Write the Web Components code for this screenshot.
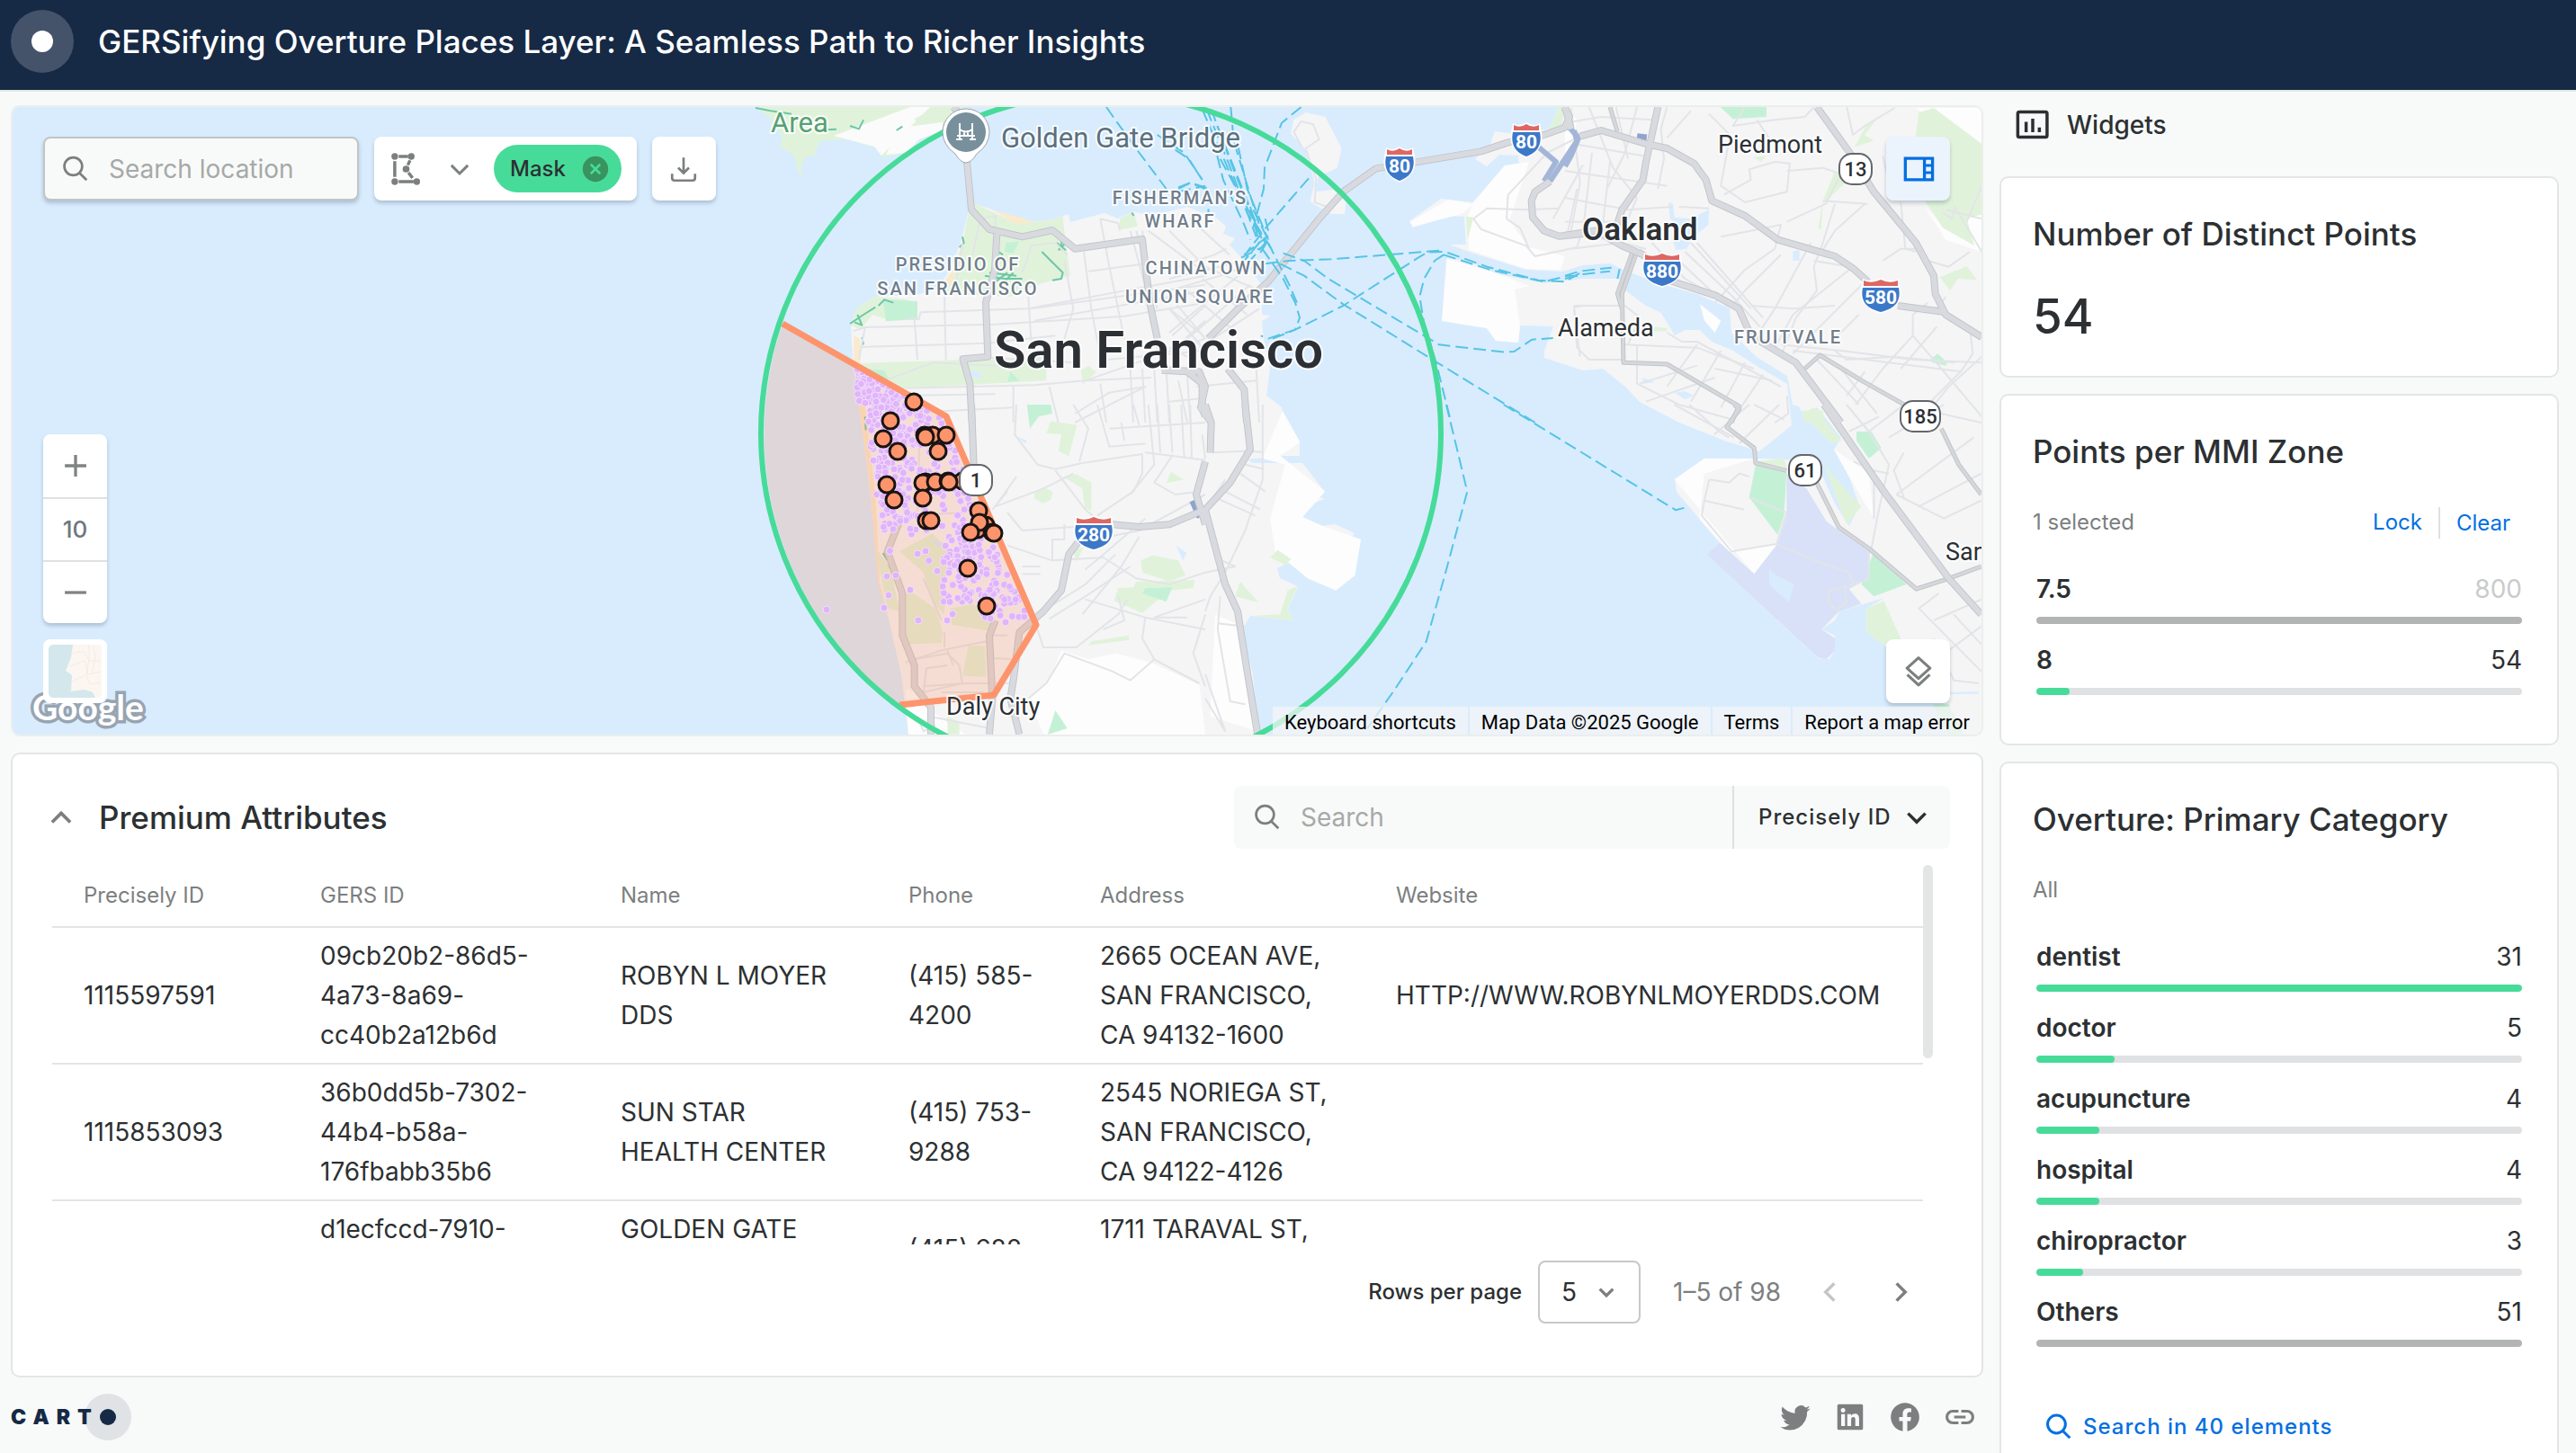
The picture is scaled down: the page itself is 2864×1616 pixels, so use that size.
<!DOCTYPE html>
<html lang="en">
<head>
<meta charset="utf-8">
<title>GERSifying Overture Places Layer</title>
<style>
html,body{margin:0;height:100%}
body{font-family:Inter,"Liberation Sans",sans-serif;font-size:28px;line-height:44px;color:#2c3032;background:#f8faf9;overflow:hidden}
</style>
</head>
<body>
<map-app></map-app>
<script>
const base = `*{box-sizing:border-box}button,input,select{font:inherit;color:inherit;margin:0;border:0;background:none;padding:0}button{cursor:pointer}h1,h2,p{margin:0;font-weight:500}svg{display:block;flex:none}`;
function define(name, css, html) {
  customElements.define(name, class extends HTMLElement {
    constructor() {
      super();
      this.attachShadow({mode: 'open'});
    }
    connectedCallback() {
      if (this.shadowRoot.childNodes.length) return;
      const markup = typeof html === 'function' ? html(this) : html;
      this.shadowRoot.innerHTML = `<style>${base}${css}</style>${markup}`;
    }
  });
}

/* ---------- icons ---------- */
const icons = {
  search: '<circle cx="10.3" cy="10" r="6.6"/><path d="M15 15l5.2 5.2"/>',
  down: '<path d="M6.5 9.5l5.5 5.5 5.5-5.5"/>',
  up: '<path d="M6.5 15l5.5-5.5 5.5 5.5"/>',
  left: '<path d="M14.5 6.5L9 12l5.5 5.5"/>',
  right: '<path d="M9.5 6.5L15 12l-5.5 5.5"/>',
  plus: '<path d="M5.5 12h13M12 5.5v13"/>',
  minus: '<path d="M5.5 12h13"/>',
  download: '<path d="M12 3.5v11.5M8 11l4 4 4-4M3.500 15.500v3.2q0 1.800 1.800 1.800h13.400q1.800 0 1.800-1.800v-3.200"/>',
  lasso: '<path d="M4.5 7v10M7 4h6M7 20h9.5M14.2 6.5l-1.4 3M13.2 14.3l2.6 3.3" stroke-width="2"/><g fill="currentColor" stroke="none"><circle cx="4.5" cy="4" r="2.1"/><circle cx="15" cy="4" r="2.1"/><circle cx="11.7" cy="12" r="2.2"/><circle cx="4.5" cy="20" r="2.1"/><circle cx="18.5" cy="20" r="2.1"/></g>',
  clear: '<circle cx="12" cy="12" r="10" fill="#38935f" stroke="none"/><path d="M8.3 8.3l7.4 7.4M15.7 8.3l-7.4 7.4" stroke="#47db99"/>',
  panel: '<path d="M4 5.500h16.500v13H4zM15.600 5.500v13" stroke-width="1.800"/><path d="M16 9.800h5M16 14.200h5" stroke-width="1.600"/>',
  layers: '<path d="M12 3.2l7.3 6.6-7.3 6.6-7.3-6.6zM4.9 13.9l7.1 6.6 7.1-6.6" stroke-linejoin="round"/>',
  chart: '<rect x="2.500" y="3.700" width="18.6" height="16" rx="1"/><path d="M7.800 16.500v-6.500M12 16.500v-8.500M16.200 16.500v-3" stroke-width="2"/>',
  twitter: '<path fill="currentColor" stroke="none" d="M22.5 6c-.8.35-1.6.6-2.5.7.9-.5 1.6-1.4 1.9-2.4-.8.5-1.8.9-2.7 1.1a4.3 4.3 0 0 0-7.4 3.9C8.300 9.100 5.100 7.400 3 4.800a4.300 4.300 0 0 0 1.300 5.700c-.7 0-1.400-.2-2-.5 0 2.100 1.500 3.800 3.500 4.200-.6.2-1.300.2-1.900.1.500 1.700 2.100 2.900 4 3a8.600 8.600 0 0 1-6.400 1.800A12.100 12.100 0 0 0 20.300 8.200c.9-.6 1.600-1.300 2.200-2.200z"/>',
  linkedin: '<path fill="currentColor" stroke="none" fill-rule="evenodd" d="M4 3h16q1 0 1 1v16q0 1-1 1H4q-1 0-1-1V4q0-1 1-1zm1.700 7v8.300h2.700V10zM7 5.700a1.600 1.600 0 1 0 .01 0zM10 10v8.300h2.700v-4.400q0-1.900 1.500-1.900t1.400 1.900v4.400h2.700v-5q0-3.600-2.900-3.600-1.900 0-2.700 1.400V10z"/>',
  facebook: '<path fill="currentColor" stroke="none" d="M22 12a10 10 0 1 0-11.600 9.900v-7H7.900V12h2.500V9.800c0-2.500 1.500-3.900 3.800-3.900 1.100 0 2.200.2 2.200.2v2.500h-1.300c-1.200 0-1.600.8-1.600 1.500V12h2.800l-.4 2.900h-2.300v7A10 10 0 0 0 22 12z"/>',
  link: '<path d="M11 7.900H7a4.100 4.100 0 0 0 0 8.200h4M13 7.900h4a4.100 4.100 0 0 1 0 8.200h-4M8 12h8"/>'
};
define('app-icon', ':host{display:block;flex:none}', el => {
  const s = el.getAttribute('size') || 36;
  return `<svg width="${s}" height="${s}" viewBox="0 0 24 24" fill="none" stroke="currentColor" stroke-width="${el.getAttribute('weight') || 1.8}" aria-hidden="true">${icons[el.getAttribute('name')]}</svg>`;
});

/* ---------- header ---------- */
define('app-header', `
:host{display:flex;align-items:center;gap:27px;height:102px;padding:0 12px 8px;background:#162945;border-bottom:2px solid #e4e8e6;color:#fff}
.logo{width:70px;height:70px;border-radius:50%;background:#45536a;display:grid;place-items:center}
.logo i{width:24px;height:24px;border-radius:50%;background:#fff}
h1{font-size:35px;line-height:52px}`,
`<span class="logo"><i></i></span><h1><slot></slot></h1>`);

/* ---------- map drawing ---------- */
const frames = {A: '840 110', B: '1300 110', C: '1740 110', D: '840 450', E: '1340 450', G: ''};
function layer(cls, sets) {
  return Object.keys(sets).map(k => {
    const t = k === 'G' ? '' : ` transform="translate(${frames[k]}) scale(${k === 'E' ? '.5548 .33333' : '.33333'})"`;
    return `<g${t}>${sets[k].split('|').map(d => `<path class="${cls}" d="M${d.trim()}"/>`).join('')}</g>`;
  }).join('');
}
const land = {G: `1010 817 1002 750 990 697 977 643 968 550 955 450 949 410 946 363 952 343 973 330 1017 328 1040 323 1057 300 1070 263 1077 233 1085 227 1103 233 1130 248 1167 245 1188 238 1190 247 1228 237 1243 243 1260 235 1280 240 1320 230 1353 243 1363 252 1360 260 1373 265 1367 272 1383 290 1403 317 1403 350 1413 351 1403 357 1405 377 1412 410 1408 440 1425 453 1426 460 1418 478 1429 492 1445 492 1445 507 1423 507 1387 511 1393 515 1448 515 1473 547 1454 548 1473 555 1459 560 1448 557 1448 575 1470 585 1484 583 1506 593 1501 600 1513 600 1509 610 1498 613 1509 617 1490 628 1506 641 1490 640 1485 657 1470 643 1454 643 1443 620 1420 632 1423 643 1443 652 1432 677 1437 690 1390 685 1383 697 1387 727 1393 750 1398 817z
|1733 119 1723 143 1690 150 1662 146 1657 160 1640 177 1653 185 1667 172 1688 173 1689 186 1673 184 1638 225 1602 221 1567 246 1571 253 1613 240 1628 241 1630 272 1612 272 1633 280 1697 300 1737 302 1760 295 1790 293 1812 303 1850 317 1887 327 1923 343 1925 370 1953 397 1987 418 1993 450 2000 452 2006 463 2020 453 2047 487 2039 500 2056 530 2067 563 2056 585 2040 560 2022 520 2000 512 1960 510 1895 510 1862 533 1864 547 1911 603 1898 617 2022 733 2034 733 2040 723 2040 690 2045 680 2095 665 2075 677 2075 703 2095 717 2120 740 2161 782 2172 817 2203 817 2203 119z
|1608 287 1603 357 1653 365 1663 379 1688 381 1690 362 1727 363 1717 390 1717 398 1760 412 1782 410 1807 430 1823 447 1867 470 1917 490 1956 502 1992 473 1987 427 1953 407 1927 390 1903 380 1890 367 1873 367 1862 373 1847 348 1830 340 1807 323 1800 310 1760 310 1717 315 1667 305 1630 290z`,
B: '415 70 455 45 520 60 575 165 560 230 495 260 490 310 570 300 590 340 585 385 540 383 480 350 470 340 485 280 455 170 405 115z'};
const white = {G: `1609 288 1603 357 1653 365 1663 379 1688 381 1690 362 1684 322 1700 318 1667 305z|1638 225 1673 184 1700 180 1678 245 1700 275 1740 285 1735 300 1697 299 1633 278 1632 240z|1610 222 1568 247 1571 252 1625 238 1638 227z`,
D: `1020 820 1110 850 1200 830 1320 860 1480 935 1500 1100 960 1100 910 980 980 920z|500 950 560 960 570 1010 700 1100 510 1100z`,
E: `155 20 190 125 150 170 240 290 195 375 235 405 312 450 300 570 262 620 205 580 140 490 130 380 160 200 115 180z|20 700 75 740 105 1090 10 1040z|940 250 1000 180 1100 180 1000 230 990 380 1050 490 1145 465 1100 565z|1260 150 1330 230 1340 380 1290 240z`,
C: '0 30 40 70 20 200 0 230z|1170 30 1390 30 1390 190z|1200 360 1260 420 1390 380 1390 510 1270 470z|450 685 520 740 500 780 465 740z'};
const park = {
G: '840 119 855 130 870 153 867 163 883 173 887 190 895 199 890 187 895 175 905 173 912 157 940 155 977 165 980 175 1007 170 1020 155 1048 145 1057 130 1070 119z',
A: '712 370 735 350 870 415 980 405 1025 390 1030 440 1050 590 940 620 850 660 630 650 690 480z|335 700 400 660 500 668 540 680 450 740 390 720 350 770 320 755z|350 882 690 870 900 870 970 850 970 940 780 950 430 970z|1215 400 1260 375 1275 425 1215 437z|1085 905 1110 890 1137 912 1092 952z',
D: '985 55 1072 68 1045 172 1010 155 1020 100 970 95z|1025 240 1070 232 1120 260 1120 355 1098 345 1090 280z|930 290 960 275 992 290 985 318 958 330 930 312z|1285 520 1325 503 1410 520 1435 570 1380 590 1290 560z|1210 612 1260 610 1270 590 1465 585 1460 612 1380 620 1290 695 1195 655z|1385 225 1430 250 1370 262z|1120 790 1245 770 1245 785 1110 803z|1060 485 1095 475 1070 525z|640 1040 680 1060 680 1100 640 1100z|1270 940 1350 1020 1300 970z|480 490 590 430 640 480 630 700 590 660 560 560z|490 640 520 625 600 680 625 760 620 795 500 800z|400 480 450 540 480 690 440 680z|650 680 720 665 790 700 780 755 655 735z|710 803 765 806 770 908 690 905z',
C: '1180 45 1230 30 1390 150 1390 385 1340 400 1365 490 1260 430 1200 340 1170 120z|965 160 1010 80 1045 60 1000 120 1030 140z|900 240 935 280 860 350 855 435 845 430 860 340z|1250 595 1340 558 1375 605 1310 600 1285 640z|290 760 340 765 340 775 290 775z|790 1040 860 1040 865 1080 800 1080z|625 195 670 190 655 210z',
B: '1300 27 1315 27 1310 95 1265 105z|990 392 1015 395 995 470z',
E: '130 510 145 485 172 515 160 535z|60 640 70 590 107 660z|90 705 150 700 165 620 185 605 165 680 175 720z|1195 30 1220 10 1275 120 1255 130z|1240 200 1265 250 1315 340 1285 400z|1325 680 1360 655 1395 785 1360 800 1325 760z|1105 190 1160 180 1165 210z'};
const park2 = {
A: '425 670 540 675 540 735 435 742z|370 900 430 905 445 935 390 925z|850 910 880 940 840 945z|835 480 880 475 860 515 830 510z',
D: '905 0 985 0 990 30 945 40 915 80z|1300 612 1390 610 1370 658 1290 630z|1000 1020 1040 1080 1010 1090 975 1100z',
C: '518 27 672 27 672 60 560 67z|1220 868 1243 850 1275 880 1270 890 1225 880z',
E: '1103 200 1165 225 1160 370 1147 435 1090 310z|1340 490 1405 600 1340 640 1315 600z|1305 90 1335 90 1355 145 1330 180 1305 120z|1458 1000 1490 1000 1520 1100 1490 1100z'};
const airport = {E: '1165 230 1205 280 1245 390 1330 490 1330 580 1290 615 1315 665 1270 690 1235 750 1262 780 1262 820 1245 850 1228 845 1005 500 1030 460 1100 565 1147 465 1165 370z'};
const lake = {C: '345 345 360 350 365 395 420 400 480 370 478 420 430 460 405 500 370 505 355 460 400 440 350 400z|760 508 782 505 782 540 760 540z|365 980 400 975 430 990 400 1003z|258 930 300 945 262 950z|70 910 110 915 85 930 90 960 125 965 125 985 85 975 65 950z', A: '720 905 755 915 750 930 720 930z', D: '1403 470 1438 495 1425 520z|870 105 905 120 900 130z|580 447 635 465 610 475z', E: '1130 550 1145 570 1180 600 1170 660 1130 600z|1490 960 1550 958 1550 965 1490 966z|1235 750 1262 720 1262 770z'};
const sand = {A: '328 790 348 800 350 900 370 1000 345 1000 328 900z|790 370 930 410 870 418z|630 610 690 520 650 620z', D: '345 0 365 0 400 300 415 600 450 740 410 600 385 300z'};
const minor = {
A: `365 762 800 752 1230 725 1500 680|350 828 770 815 1000 790|550 712 910 700 1500 590|630 660 635 870|530 735 540 870|550 712 545 735 500 735|920 700 1500 620|1095 510 1120 700 1150 860|1150 400 1180 560 1230 800|1110 575 1300 550|930 740 1500 640|910 660 920 820|680 860 920 870 1060 880|430 940 590 880 800 890 960 860|500 965 930 955 1100 940 1320 930|480 990 800 985|860 960 860 1080|560 1045 860 1030|325 775 365 762 345 870|720 540 750 400 800 390 800 430|670 610 690 480|890 580 920 490 1000 480 1040 520|1250 440 1320 700 1350 900|1270 440 1340 700|1290 440 1300 500|1100 940 1500 800|1170 870 1500 840|1250 900 1260 1080|1290 900 1300 1080|1330 900 1340 1080|1370 900 1380 1080|980 960 1010 1080|1150 950 1170 1080|1390 790 1500 690|1400 830 1500 740|1380 700 1500 840|1400 680 1500 800|1150 400 1210 415 1215 440|1310 440 1500 580|1030 540 1060 700 1030 800|1065 1050 1180 980 1300 960 1065 1080`,
B: `0 640 170 590 250 560|0 600 250 540|30 560 150 520 190 500|0 440 120 560 300 640|70 400 200 520|0 700 100 780|60 640 200 760|110 600 260 720|0 780 230 590|60 800 270 620|100 830 300 700|0 830 60 860|30 940 60 1080|60 920 70 1080|90 960 290 940|100 1000 0 1010|290 900 300 1080|445 165 415 110 440 75 480 85 500 135 455 165 490 270 485 345 540 365|1015 400 1060 365 1190 370 1300 365|1015 400 1040 435 1190 490 1220 525 1360 495 1380 430|1125 400 1130 320 1260 180 1380 120|1125 400 1170 430 1200 500|1280 400 1380 220|1330 440 1360 300|1350 695 1380 690|1350 695 1370 860`,
C: `80 27 160 230 240 330|170 27 210 200|240 27 200 180 140 300|0 80 120 60 290 70|30 150 260 190|0 240 340 290|0 330 210 370 360 360|20 30 50 280 20 440|90 180 60 440|150 210 120 470|0 410 200 410|20 500 190 480 270 500|340 27 320 100 330 200 310 300|420 40 340 130|480 50 550 120 520 290 600 345 740 310 750 215 700 210 615 235 620 270 530 320|600 27 560 90 700 70 800 60 830 27|640 70 680 130|940 27 960 120 1000 90 1100 30|740 240 860 230 920 250 870 350 740 410|520 460 720 420 700 500 600 570 500 680|380 360 480 365|420 480 620 700|440 480 660 730|400 510 560 660 650 760|380 540 540 690|290 480 400 600 540 680|250 500 320 560|720 520 600 640 560 690|820 480 700 700 640 790|900 350 860 480 830 560 840 640 770 730 720 860|1000 350 900 440 850 520|1120 345 1135 500 1170 510|960 560 760 720 700 830|1000 610 850 760 760 850|1060 540 1120 500 1180 500|830 540 950 560|620 690 760 700 900 690|720 820 920 840 1160 870 1390 880|760 840 1320 910|900 840 940 870 1100 860 1300 880|1160 720 1160 790 1230 870 1390 1060|1160 790 1060 900 970 1020|1320 910 1230 1000 1190 1060|1390 860 1280 960 1200 1060|1350 760 1360 850 1320 910|1240 760 1120 900|980 720 900 800|1210 680 1160 720|1270 660 1240 700|30 690 200 690 250 730 210 820|30 690 40 830 80 870 200 870|200 820 440 830 630 900|240 820 240 950 380 1020 560 1070|340 780 390 810 440 810 720 960|440 820 340 960|520 840 420 1010|600 880 520 1030|660 920 560 1070|250 950 440 890|270 1010 500 930|740 990 745 1050 700 1080|500 900 690 940|840 870 980 1020|920 900 1040 1050|1000 910 940 990|1260 380 1290 400 1300 360 1390 510|1270 370 1390 400|1350 510 1280 560 1210 540|1060 190 1080 280 1170 300|860 340 1010 350|240 330 180 470|1390 290 1340 410`,
D: `870 0 865 100 940 200 1000 215 1090 195|870 240 800 340 960 280 1060 230|840 360 890 420 1100 405|790 350 840 290|1060 0 1110 80 1080 190|1140 0 1180 140 1300 130|1180 80 1500 60|1300 160 1500 185|1220 60 1230 120|1260 0 1280 70|1310 0 1330 200 1250 300|1340 0 1350 160|1380 0 1390 160|1420 0 1430 180|1450 0 1455 180|1490 100 1500 180|1090 195 1290 165 1290 230 1260 290 1140 370|840 470 990 520 1160 510 1270 580 1380 600 1500 560|1030 400 1030 450 990 450 990 520|1100 550 1160 500 1300 380|940 700 1100 600 1200 500|980 715 1100 640 1250 540|1280 440 1220 540 1090 700|1160 400 1100 350 1000 220|930 720 960 810 1070 810 1210 700 1240 650|1160 750 1230 720 1210 640|1100 650 1300 710 1500 750|1300 710 1290 780 1330 850 1480 930|910 980 970 930 1030 830 1190 890 1250 920 1330 850|1500 700 1460 830 1500 940|1440 710 1330 710 1500 650|890 540 950 540|890 565 950 565|560 580 620 720|500 860 620 820 770 790|530 850 640 830 680 870|640 820 660 870|680 870 690 930 560 960 570 880 640 870|560 940 700 930 850 930|780 845 860 850|780 770 840 770|550 0 540 370|630 760 630 810|600 1070 560 1090 540 1040|580 1040 780 1080|620 960 760 960|510 370 700 360|1390 170 1330 260 1400 300 1480 290|1180 440 1280 420 1500 300`,
E: `15 160 80 155 115 158|118 215 80 200|115 0 115 250 80 420 40 560 10 640 0 690|0 350 40 250|20 310 100 370|40 290 110 350|70 230 120 290|0 560 60 540 20 510|25 730 80 740|30 640 25 750 50 990 80 1000|0 900 40 1090 0 980|1010 250 1000 320 995 370 1055 490 1145 465 1165 360 1090 310|1010 250 1050 260 1070 230 1090 240|1000 320 1080 350|1145 465 1220 520 1290 560 1300 600 1250 620 1248 660 1265 685 1285 660 1282 600|1330 490 1330 580 1300 600|940 0 1060 110|970 0 1030 90 1050 110|1090 0 1020 100|1150 0 1070 130|1100 0 1160 50|1285 0 1330 90 1370 200 1350 350 1335 480|1330 90 1400 0|1370 110 1480 0|1385 300 1540 110|1385 300 1480 380 1555 320|1400 160 1380 220 1400 310|1430 340 1555 230|1340 220 1370 230|1460 720 1555 650|1490 820 1555 740|1400 0 1500 40 1555 60|1470 630 1430 680 1555 890|1460 780 1500 920 1550 930|1300 190 1340 220 1340 380|1500 700 1555 800|1350 40 1290 90`};
const major = {
A: '705 210 720 370 780 435 890 460 990 438 1065 500 1290 468 1315 680 1340 800|805 450 798 570 768 680 775 860 692 868 715 950 722 1080|690 60 660 27|1355 905 1440 910 1490 950 1490 1030 1500 1060',
B: '130 800 230 700 330 610 500 400 580 310 690 232 770 220 1040 175 1130 145 1250 120 1320 95 1335 60 1318 27|1380 450 1300 458 1250 440 1212 395 1208 340 1220 310 1270 275|0 905 100 910 120 960 105 1030 140 1080|195 900 250 970 258 1080',
C: '0 27 20 100|50 125 120 105 270 150 340 165 430 215 470 270 490 340 600 390 710 470 900 525 960 565 1010 610|310 27 270 210 260 270 190 370 170 430 0 455|120 450 190 490 260 520 330 600 500 655 580 700 620 790 770 880 920 1080|840 27 950 180 1030 310 1080 370 1170 480 1230 590 1235 650 1270 720 1390 795|1110 690 1260 710',
D: '720 0 730 250|1190 400 1280 408 1380 400 1500 350|1500 190 1470 300 1500 400|1075 460 1045 500 1020 620 960 690 880 760 860 920 850 980 880 1100|480 390 440 490 490 630 490 770 530 870 530 940 585 1010 585 1100|800 720 780 770 790 980 780 1100|1500 0 1480 20',
E: '0 0 12 60 10 160|80 0 90 150 50 260 0 350 40 600 65 690 85 900 105 1100|1240 0 1360 290 1490 580 1555 700'};
const mid = {
C: '240 510 190 650 195 880 340 885 580 1025 555 1080|225 510 175 650 190 700|800 900 850 855 990 940 1140 1025|150 27 175 110',
E: '1060 0 1070 15 1045 75 1100 145 1103 195 1165 220|1225 260 1270 410 1330 480 1425 615 1490 580 1555 540|1475 80 1510 200 1555 300'};
const ramp = {C: '10 90 45 130 20 190 0 225', B: '1225 155 1290 210 1250 275|1350 105 1360 140 1270 275'};
const ferry = {
A: '1170 27 1200 70 1280 180 1370 300|1340 120 1430 180 1490 270|1410 295 1450 280 1500 300|1410 310 1500 290',
B: `110 35 260 380 320 480|125 35 200 220 290 460|140 35 220 250 310 470|160 90 300 440|170 200 290 420 340 500|205 27 215 140 300 420|230 160 260 300 330 470|160 190 180 270 250 420 270 470|440 27 375 80 318 230 315 300 280 430|465 265 330 420 260 510|20 170 65 200 110 270|30 300 70 280 135 300 130 380|250 520 300 480 340 450|240 530 320 490|260 550 330 470|320 550 400 540 540 535 915 505|380 515 450 540 530 600 900 820 1120 845 1150 843 1210 803 1280 798|370 550 450 590 580 685 870 865 1220 1080|310 500 380 600 420 680 435 730 420 770 330 800 305 790|330 480 400 620 430 690|345 800 420 770 580 690 830 530 860 512 920 510 1060 560 1230 605 1320 610 1380 575|915 520 1070 570 1250 610 1330 590 1380 590|915 520 885 540 850 600 835 660 850 750 890 880 940 1080|280 370 330 470 300 520|320 400 330 440|270 360 300 480 250 540`,
C: '0 590 50 575 155 563|0 600 60 585 150 575|182 568 175 600',
E: '483 0 525 290 480 570 443 790 380 950 325 1080|598 0 943 352 970 340'};
const scrub = {A: '0 30 50 40 120 50|240 103 270 101|315 90 345 100 360 70|470 105 490 92|315 750 360 720 400 695|340 720 355 755 330 745|410 690 430 670 460 680|355 795 360 820|680 495 695 480 690 460|1005 480 1035 505|1035 480 1010 505|1020 470 1022 505|955 510 1025 580 1020 600 990 605|765 590 830 600 890 600|780 580 870 590|810 510 825 520|1255 380 1262 390|800 610 840 580|830 610 860 580', D: '425 495 440 520|445 535 455 555|365 40 368 85'};
const streak = {C: '240 128 272 132', D: '1460 320 1485 375'};

function seeded(seed) { return () => (seed = (seed * 16807) % 2147483647) / 2147483647; }
function dots() {
  const rnd = seeded(4711), out = [];
  const edgeR = y => y < 463 ? 870 + (y - 360) * 1.77 : 1052 + (y - 463) * .431;
  const edgeL = y => y < 450 ? 953 : 962 + (y - 450) * .125;
  while (out.length < 600) {
    const y = 408 + rnd() * 280, l = edgeL(y), r = edgeR(y) - 6, x = l + rnd() * (r - l);
    if (r < l) continue;
    if (y > 590 && x < 1048 && rnd() < .98) continue;
    if (y < 590 && x > 1015 && rnd() < .35) continue;
    if (y > 672 && x < 1090) continue;
    out.push([x, y]);
  }
  [[919, 678], [983, 676], [1021, 690], [1053, 690], [1059, 683], [996, 640], [986, 641], [1020, 616], [1029, 613], [1042, 635], [1012, 656], [988, 662], [1118, 692]].forEach(p => out.push(p));
  return out.map(([x, y]) => `<circle cx="${x.toFixed(1)}" cy="${y.toFixed(1)}" r="4"/>`).join('');
}
const places = [[529,-9],[450,55],[425,115],[475,155],[592,103],[563,102],[567,107],[636,102],[610,157],[437,268],[463,318],[690,256],[568,257],[557,262],[600,259],[642,256],[645,257],[559,312],[571,387],[584,387],[745,355],[768,402],[742,418],[747,393],[718,425],[790,425],[796,428],[707,546],[772,671]];
const shield = (x, y, t) => {
  const w = t.length > 2 ? 20 : 15, o = w + 2;
  return `<g transform="translate(${x} ${y})"><path style="fill:#fff" d="M${-o} -9L${-w} -19Q${-w / 2} -14 0 -20Q${w / 2} -14 ${w} -19L${o} -9C${o + 3} 8 ${w - 5} 15 0 20C${5 - w} 15 ${-o - 3} 8 ${-o} -9z"/><path style="fill:#dd6763" d="M${-w + 1} -11V-17Q${-w / 2} -13 0 -18Q${w / 2} -13 ${w - 1} -17V-11z"/><path style="fill:#3c78c8" d="M${-w} -9H${w}C${w + 3} 6 ${w - 4} 14 0 18C${4 - w} 14 ${-w - 3} 6 ${-w} -9z"/><text class="sh" y="9">${t}</text></g>`;
};
const pill = (x, y, t) => {
  const w = t.length > 2 ? 22 : 18;
  return `<rect x="${x - w}" y="${y - 17}" width="${w * 2}" height="34" rx="14" fill="#fff" stroke="#63676b" stroke-width="2"/><text class="pl" x="${x}" y="${y + 8}">${t}</text>`;
};
const label = (x, y, cls, t) => `<text class="${cls}" x="${x}" y="${y}">${t}</text>`;

define('map-canvas', `
:host{display:block;background:#d8ecfe}
svg{width:100%;height:100%}
path{vector-effect:non-scaling-stroke;fill:none;stroke-linejoin:round}
path.land{fill:#f5f5f6}path.white{fill:#fdfdfd}path.park{fill:#e0f3da}path.park2{fill:#c4f1d6}path.air{fill:#d8e1f7}path.lake{fill:#d8ecfe}path.sand{fill:#faeacb}
path.minor{stroke:#e3e4e8;stroke-width:2}
path.c1{stroke:#c2c6ca;stroke-width:8}path.f1{stroke:#d9dadf;stroke-width:6}
path.c2{stroke:#c2c6ca;stroke-width:5}path.f2{stroke:#d5d7da;stroke-width:3}
path.ramp{stroke:#a4b6d8;stroke-width:6}
path.streak{stroke:#8fa3cc;stroke-width:9}
path.ferry{stroke:#56c4e4;stroke-width:2;stroke-dasharray:14 6}
path.scrub{stroke:#6cc7a6;stroke-width:2}
text{font-family:Roboto,sans-serif;paint-order:stroke;stroke:#fff;stroke-opacity:.85;stroke-width:4px;stroke-linejoin:round;fill:#2c3034}
.area{font-size:20px;font-weight:500;letter-spacing:2px;fill:#717d8b;text-anchor:middle}
.town{font-size:27px}.city{font-size:35px;font-weight:600}.big{font-size:58px;font-weight:600;text-anchor:middle}
.poi{font-size:31px;fill:#5b707f}.green{font-size:31px;fill:#56a173}
.sh{font-size:21px;font-weight:700;fill:#fff;stroke:none;text-anchor:middle}
.pl{font-size:22px;font-weight:500;stroke:none;text-anchor:middle}`,
() => `<svg viewBox="14 119 2189 698" preserveAspectRatio="xMidYMid slice" role="img" aria-label="Map of San Francisco and Oakland">
${layer('land', land)}${layer('white', white)}${layer('park', park)}
<path d="M927 151L1012 119H1034L980 173L972 163z" style="fill:#fbfbfb"/><path d="M1017 132L1040 120V140L1000 160L982 172L1022 148z" style="fill:#e0f3da"/><path d="M985 172L1000 142L1048 136V145L1022 155L1007 170z" style="fill:#fbfbfb"/>
${layer('park2', park2)}${layer('air', airport)}${layer('lake', lake)}${layer('sand', sand)}
${layer('scrub', scrub)}${layer('minor', minor)}${layer('streak', streak)}${layer('ramp', ramp)}${layer('c2', mid)}${layer('f2', mid)}${layer('c1', major)}${layer('f1', major)}${layer('ferry', ferry)}
<path d="M870 360L1052 463L1152 695L1105 773L1000 784A378 378 0 0 1 870 360z" style="fill:#fc8a58;fill-opacity:.22"/>
<g fill="#e0b3fd" stroke="#f3e0f6" stroke-width="1">${dots()}</g>
<path d="M870 360L1052 463L1152 695L1105 773L1000 784" style="stroke:#fd946c;stroke-width:7"/>
<circle cx="1224" cy="482" r="378" fill="none" stroke="#47db99" stroke-width="6"/>
<g fill="#fd946c" stroke="#191412" stroke-width="3">${places.map(([u, v]) => `<circle cx="${Math.round(840 + u / 3)}" cy="${Math.round(450 + v / 3)}" r="9"/>`).join('')}</g>
${label(857, 147, 'green', 'Area')}${label(1113, 164, 'poi', 'Golden Gate Bridge')}
${label(1312, 227, 'area', 'FISHERMAN’S')}${label(1312, 253, 'area', 'WHARF')}
${label(1065, 301, 'area', 'PRESIDIO OF')}${label(1065, 328, 'area', 'SAN FRANCISCO')}
${label(1341, 305, 'area', 'CHINATOWN')}${label(1334, 337, 'area', 'UNION SQUARE')}${label(1988, 382, 'area', 'FRUITVALE')}
${label(1288, 409, 'big', 'San Francisco')}${label(1759, 267, 'city', 'Oakland')}
${label(1732, 374, 'town', 'Alameda')}${label(1910, 170, 'town', 'Piedmont')}${label(1052, 795, 'town', 'Daly City')}${label(2163, 623, 'town', 'San')}
${shield(1556, 183, '80')}${shield(1697, 156, '80')}${shield(1848, 300, '880')}${shield(2091, 329, '580')}${shield(1216, 593, '280')}
${pill(2063, 188, '13')}${pill(2135, 463, '185')}${pill(2007, 523, '61')}${pill(1085, 534, '1')}
<g transform="translate(1074 147)"><path d="M0 34Q-6 34 -12 24Q-26 14 -26 0A26 26 0 0 1 26 0Q26 14 12 24Q6 34 0 34z" style="fill:#fff;stroke:#9aa5ad;stroke-width:1"/><circle r="22" fill="#78909c"/><path d="M-7 -10V8M7 -10V8M-10 4H10M-7 -3Q0 2 7 -3M-11 8H-4M4 8H11M-2 -2V4M2 -2V4" style="stroke:#fff;stroke-width:2"/></g>
</svg>`);

/* ---------- map panel ---------- */
define('map-panel', `
:host{display:block;position:relative;min-height:0;border:2px solid #ebeeed;border-radius:10px;overflow:hidden}
map-canvas{position:absolute;inset:0}
.over{position:relative;height:100%;padding:33px 35px 35px 34px;display:flex;flex-direction:column;justify-content:space-between}
.row{display:flex;justify-content:space-between;align-items:flex-start}
.tools{display:flex;gap:17px}
.box{background:#fff;border-radius:8px;box-shadow:0 3px 4px rgba(60,80,100,.28);height:71px;color:#7c7f80}
label.box{display:flex;align-items:center;gap:19px;width:351px;padding:0 16px;border:2px solid #c2c5c5;background:#f8faf9}
input{width:100%;min-width:0;outline:0}
input::placeholder{color:#a6a9a8;opacity:1}
.mask{display:flex;align-items:center;padding:0 17px 0 15px;gap:18px}
.mask button.ic{display:grid;place-items:center}
.chip{display:flex;align-items:center;gap:16px;height:53px;padding:0 12px 0 18px;border-radius:27px;background:#47db99;color:#2c3032;font-size:24px;font-weight:500}
.sq{width:71px;display:grid;place-items:center}
.sq.on{background:#ebf3fd;color:#036fe2}
.stack{display:flex;flex-direction:column;gap:18px}
.zoom{height:auto;width:71px;display:grid;grid-template-rows:repeat(3,70px);text-align:center;color:#6f7780;font-size:26px;font-weight:500}
.zoom>*{display:grid;place-items:center}
.zoom>*+*{border-top:2px solid #dfe0e0}
.zoom button{color:#808384}
.base{width:71px;height:71px;padding:6px;background:#fff;border-radius:8px}
.end{align-items:flex-end}
.google{position:absolute;left:22px;bottom:6px;font:700 39px/50px Lato,sans-serif;color:#fff;-webkit-text-stroke:7px #98a4b1;paint-order:stroke}
.attr{position:absolute;right:0;bottom:0;display:flex;gap:2px;font:22px/27px Roboto,sans-serif;color:#000}
.attr>*{background:rgba(245,245,245,.72);padding:4px 13px 0;color:#000;text-decoration:none;font:inherit;height:31px}`,
`<map-canvas></map-canvas>
<span class="google">Google</span>
<div class="over">
 <div class="row">
  <div class="tools">
   <label class="box"><app-icon name="search" size="36"></app-icon><input type="text" aria-label="Search location" placeholder="Search location"></label>
   <div class="box mask"><button class="ic" aria-label="Draw mask"><app-icon name="lasso" size="42"></app-icon></button><button class="ic" aria-label="Mask modes"><app-icon name="down" size="40"></app-icon></button><button class="chip">Mask<app-icon name="clear" size="34"></app-icon></button></div>
   <button class="box sq" aria-label="Download"><app-icon name="download" size="36"></app-icon></button>
  </div>
  <button class="box sq on" aria-label="Toggle panel"><app-icon name="panel" size="44"></app-icon></button>
 </div>
 <div class="row end">
  <div class="stack">
   <div class="box zoom"><button aria-label="Zoom in"><app-icon name="plus" size="44"></app-icon></button><span>10</span><button aria-label="Zoom out"><app-icon name="minus" size="44"></app-icon></button></div>
   <button class="base" aria-label="Basemap"><svg width="59" height="59" viewBox="0 0 59 59"><rect width="59" height="59" rx="5" fill="#d3e7ec"/><path d="M27 0H54Q59 0 59 5V54Q59 59 55 59H52L49 53L40 50L25 52L26 34L19 29L25 14z" fill="#fbf6f1"/><g fill="none" stroke="#f6ebe2"><path d="M26 10L38 7L46 18H58M24 24L40 18L44 33L58 30M45 0V16L42 34L46 44L58 42M27 40L42 34M50 2L52 17L48 32"/></g></svg></button>
  </div>
  <button class="box sq" aria-label="Layers"><app-icon name="layers" size="42"></app-icon></button>
 </div>
</div>
<div class="attr"><button>Keyboard shortcuts</button><span>Map Data ©2025 Google</span><a href="#terms">Terms</a><a href="#report">Report a map error</a></div>`);

/* ---------- attribute table ---------- */
const rows = [
  ['1115597591', '09cb20b2-86d5-4a73-8a69-cc40b2a12b6d', 'ROBYN L MOYER DDS', '(415) 585-4200', '2665 OCEAN AVE, SAN FRANCISCO, CA 94132-1600', 'HTTP://WWW.ROBYNLMOYERDDS.COM'],
  ['1115853093', '36b0dd5b-7302-44b4-b58a-176fbabb35b6', 'SUN STAR HEALTH CENTER', '(415) 753-9288', '2545 NORIEGA ST, SAN FRANCISCO, CA 94122-4126', ''],
  ['', 'd1ecfccd-7910-', 'GOLDEN GATE', '(415) 682-<br>&nbsp;', '1711 TARAVAL ST,', '']
];
define('attribute-table', `
:host{display:flex;flex-direction:column;height:695px;padding:35px 35px 0 32px;background:#fff;border:2px solid #e3e6e5;border-radius:10px}
.head{display:flex;align-items:center;gap:20px;height:70px}
.head button{color:#7c7f80}
h2{font-size:35px;flex:1}
.find{display:flex;height:70px;border-radius:8px;background:#f8faf9;overflow:hidden}
.find label{display:flex;align-items:center;gap:19px;width:556px;padding:0 19px;border-right:2px solid #dfe1e1;color:#7c7f80}
input{width:100%;outline:0}
input::placeholder{color:#a6a9a8;opacity:1}
.pick{position:relative;display:flex;align-items:center}
.pick select{appearance:none;height:70px;outline:0}
.pick app-icon{position:absolute;right:16px;pointer-events:none}
.col{width:240px;font-size:24px;font-weight:500;letter-spacing:1px}
.col select{width:240px;padding-left:27px;letter-spacing:inherit}
.scroll{display:flex;align-items:flex-start;margin:18px 0 0 12px;height:422px;overflow:hidden;padding-right:19px}
.scroll i{width:11px;height:215px;border-radius:6px;background:#e4e6e5;flex:none}
table{flex:1;width:100%;border-collapse:collapse;table-layout:fixed}
th,td{text-align:left;padding:9px 30px 9px 35px;border-bottom:2px solid #e3e5e5;vertical-align:middle;font-weight:400}
th{height:69px;padding-block:0;font-size:24px;color:#7c7f80}
td{height:152px}
tr:last-child td:not(:nth-child(4)){vertical-align:top}
.foot{display:flex;align-items:center;justify-content:flex-end;margin-top:17px;height:71px;padding-right:34px}
.foot label{font-size:24px;font-weight:500;margin-right:18px}
.rows select{width:114px;border:2px solid #c6c9c9;border-radius:8px;padding-left:24px}
.rows app-icon{right:22px;color:#7c7f80}
.foot span{color:#7c7f80;margin:0 34px 0 36px}
.foot button{color:#7c7f80;width:42px;height:42px}
.foot button+button{margin-left:36px}
.foot button:disabled{color:#c4c6c6}`,
() => `<div class="head"><button aria-label="Collapse"><app-icon name="up" size="44" weight="2"></app-icon></button><h2>Premium Attributes</h2>
<div class="find"><label><app-icon name="search" size="36"></app-icon><input type="text" aria-label="Search attributes" placeholder="Search"></label><div class="pick col"><select aria-label="Search column"><option>Precisely ID</option></select><app-icon name="down" size="42" weight="2"></app-icon></div></div></div>
<div class="scroll"><table><colgroup><col style="width:263px"><col style="width:334px"><col style="width:320px"><col style="width:213px"><col style="width:329px"><col></colgroup>
<thead><tr>${['Precisely ID', 'GERS ID', 'Name', 'Phone', 'Address', 'Website'].map(t => `<th scope="col">${t}</th>`).join('')}</tr></thead>
<tbody>${rows.map(r => `<tr>${r.map(c => `<td>${c}</td>`).join('')}</tr>`).join('')}</tbody></table><i></i></div>
<div class="foot"><label for="rpp">Rows per page</label><div class="pick rows"><select id="rpp"><option>5</option></select><app-icon name="down" size="32" weight="2.500"></app-icon></div><span>1–5 of 98</span><button disabled aria-label="Previous page"><app-icon name="left" size="42" weight="2"></app-icon></button><button aria-label="Next page"><app-icon name="right" size="42" weight="2"></app-icon></button></div>`);

/* ---------- widgets ---------- */
define('widget-card', `
:host{display:block;background:#fff;border:2px solid #e3e6e5;border-radius:10px;padding:40px 35px}
h2{font-size:35px}`, el => `<h2>${el.getAttribute('heading')}</h2><slot></slot>`);
define('big-number', ':host{display:block;font-size:53px;line-height:70px;font-weight:500;margin-top:35px}', '<slot></slot>');
define('widget-status', `
:host{display:flex;align-items:center;justify-content:space-between;height:44px;margin-top:35px;font-size:24px;color:#7c7f80}
div{display:flex;align-items:center;margin-right:17px}
button{color:#036fe2}button+button{border-left:2px solid #dfe1e1;margin-left:18px;padding-left:18px;line-height:35px}`,
el => `<span><slot></slot></span>${el.hasAttribute('actions') ? '<div><button>Lock</button><button>Clear</button></div>' : ''}`);
define('category-row', `
:host{display:block;height:79px;padding:0 4px}
div{display:flex;justify-content:space-between;line-height:44px}
b{font-weight:600}
.dim{color:#c9cbcb}
i{display:block;height:8px;margin-top:9px;border-radius:4px;background:#e0e1e3;overflow:hidden}
i s{display:block;height:8px;border-radius:4px;background:#47db99}
s.gray{background:#b3b4b4}`, el => {
  const g = name => el.getAttribute(name);
  return `<div><b>${g('label')}</b><span class="${el.hasAttribute('dim') ? 'dim' : ''}">${g('value')}</span></div><i><s class="${el.hasAttribute('gray') ? 'gray' : ''}" style="width:${g('fill')}%"></s></i>`;
});
define('widgets-panel', `
:host{display:flex;flex-direction:column;gap:18px;min-height:0}
.top{display:flex;align-items:center;gap:17px;height:61px;padding:0 16px 18px;font-weight:500}
widget-card{flex:none}
.one{height:224px}.two{height:391px}.three{height:860px}
.list{margin-top:30px}
.more{display:flex;align-items:center;gap:9px;color:#036fe2;font-size:24px;font-weight:500;letter-spacing:1px;margin:49px 0 0 11px}`,
`<div class="top"><app-icon name="chart" size="42" weight="2"></app-icon>Widgets</div>
<widget-card class="one" heading="Number of Distinct Points"><big-number>54</big-number></widget-card>
<widget-card class="two" heading="Points per MMI Zone"><widget-status actions>1 selected</widget-status>
<div class="list"><category-row label="7.5" value="800" fill="100" dim gray></category-row><category-row label="8" value="54" fill="6.8"></category-row></div></widget-card>
<widget-card class="three" heading="Overture: Primary Category"><widget-status>All</widget-status>
<div class="list"><category-row label="dentist" value="31" fill="100"></category-row><category-row label="doctor" value="5" fill="16.1"></category-row><category-row label="acupuncture" value="4" fill="12.9"></category-row><category-row label="hospital" value="4" fill="12.9"></category-row><category-row label="chiropractor" value="3" fill="9.7"></category-row><category-row label="Others" value="51" fill="100" gray></category-row></div>
<button class="more"><app-icon name="search" size="36" weight="2"></app-icon>Search in 40 elements</button></widget-card>`);

/* ---------- footer ---------- */
define('app-footer', `
:host{display:flex;align-items:center;justify-content:space-between;height:52px}
.brand{display:flex;align-items:center;color:#162945;font-size:23px;font-weight:900;text-decoration:none;position:relative}
.brand span{letter-spacing:8px;position:relative;z-index:1}
.brand i{width:52px;height:52px;border-radius:50%;background:#e0e3e6;display:grid;place-items:center;margin-left:-16px}
.brand i::after{content:"";width:18px;height:18px;border-radius:50%;background:#162945}
nav{display:flex;gap:23px;color:#7c7f80;padding-right:7px}
nav a{color:inherit}`,
`<a class="brand" href="#carto" aria-label="CARTO"><span>CART</span><i></i></a>
<nav><a href="#tw" aria-label="Twitter"><app-icon name="twitter" size="38"></app-icon></a><a href="#in" aria-label="LinkedIn"><app-icon name="linkedin" size="38"></app-icon></a><a href="#fb" aria-label="Facebook"><app-icon name="facebook" size="38"></app-icon></a><a href="#link" aria-label="Copy link"><app-icon name="link" size="38" weight="2"></app-icon></a></nav>`);

/* ---------- page ---------- */
define('map-app', `
:host{display:flex;flex-direction:column;height:100vh;overflow:hidden}
main{flex:1;min-height:0;display:grid;grid-template-columns:minmax(0,1fr) 622px;gap:18px;padding:15px 19px 0 12px}
.left{display:flex;flex-direction:column;gap:18px;padding-bottom:14px;min-height:0}
map-panel{flex:1}`,
`<app-header>GERSifying Overture Places Layer: A Seamless Path to Richer Insights</app-header>
<main><div class="left"><map-panel></map-panel><attribute-table></attribute-table><app-footer></app-footer></div><widgets-panel></widgets-panel></main>`);
</script>
</body>
</html>
